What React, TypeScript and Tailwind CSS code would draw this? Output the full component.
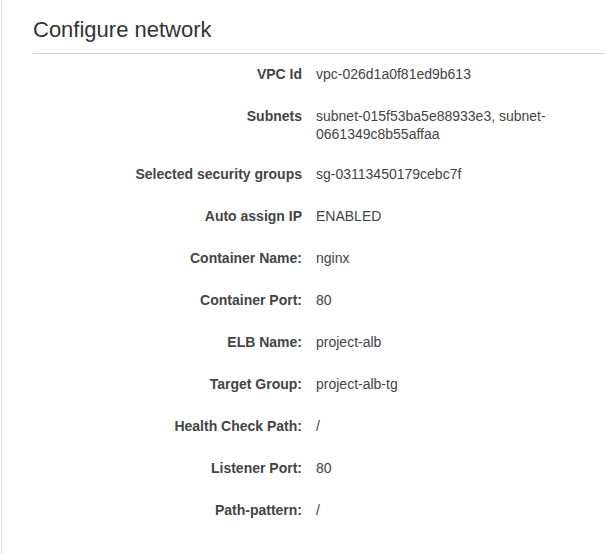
const rows: [string, string][] = [
  ["VPC Id", "vpc-026d1a0f81ed9b613"],
  ["Subnets", "subnet-015f53ba5e88933e3, subnet-0661349c8b55affaa"],
  ["Selected security groups", "sg-03113450179cebc7f"],
  ["Auto assign IP", "ENABLED"],
  ["Container Name:", "nginx"],
  ["Container Port:", "80"],
  ["ELB Name:", "project-alb"],
  ["Target Group:", "project-alb-tg"],
  ["Health Check Path:", "/"],
  ["Listener Port:", "80"],
  ["Path-pattern:", "/"],
];

export default function App() {
  return (
    <div className="w-[605px] h-[554px] bg-white border-l border-[#dcdcdc] ml-px font-['Liberation_Sans',Arial,sans-serif] text-[#444]">
      <div className="pl-[31px]">
        <h2 className="pt-[16px] pb-[9px] text-[22px] leading-[28px] text-[#333]">
          Configure network
        </h2>
        <div className="h-px bg-[#d5d5d5]" />
        <div className="grid grid-cols-[269px_250px] gap-x-[14px] gap-y-[24px] pt-[11px] text-[14px] leading-[18px]">
          {rows.map(([label, value]) => (
            <div key={label} className="contents">
              <div className="text-right font-bold">{label}</div>
              <div className={value.length > 30 ? "-mb-[2px]" : ""}>{value}</div>
            </div>
          ))}
        </div>
      </div>
    </div>
  );
}
